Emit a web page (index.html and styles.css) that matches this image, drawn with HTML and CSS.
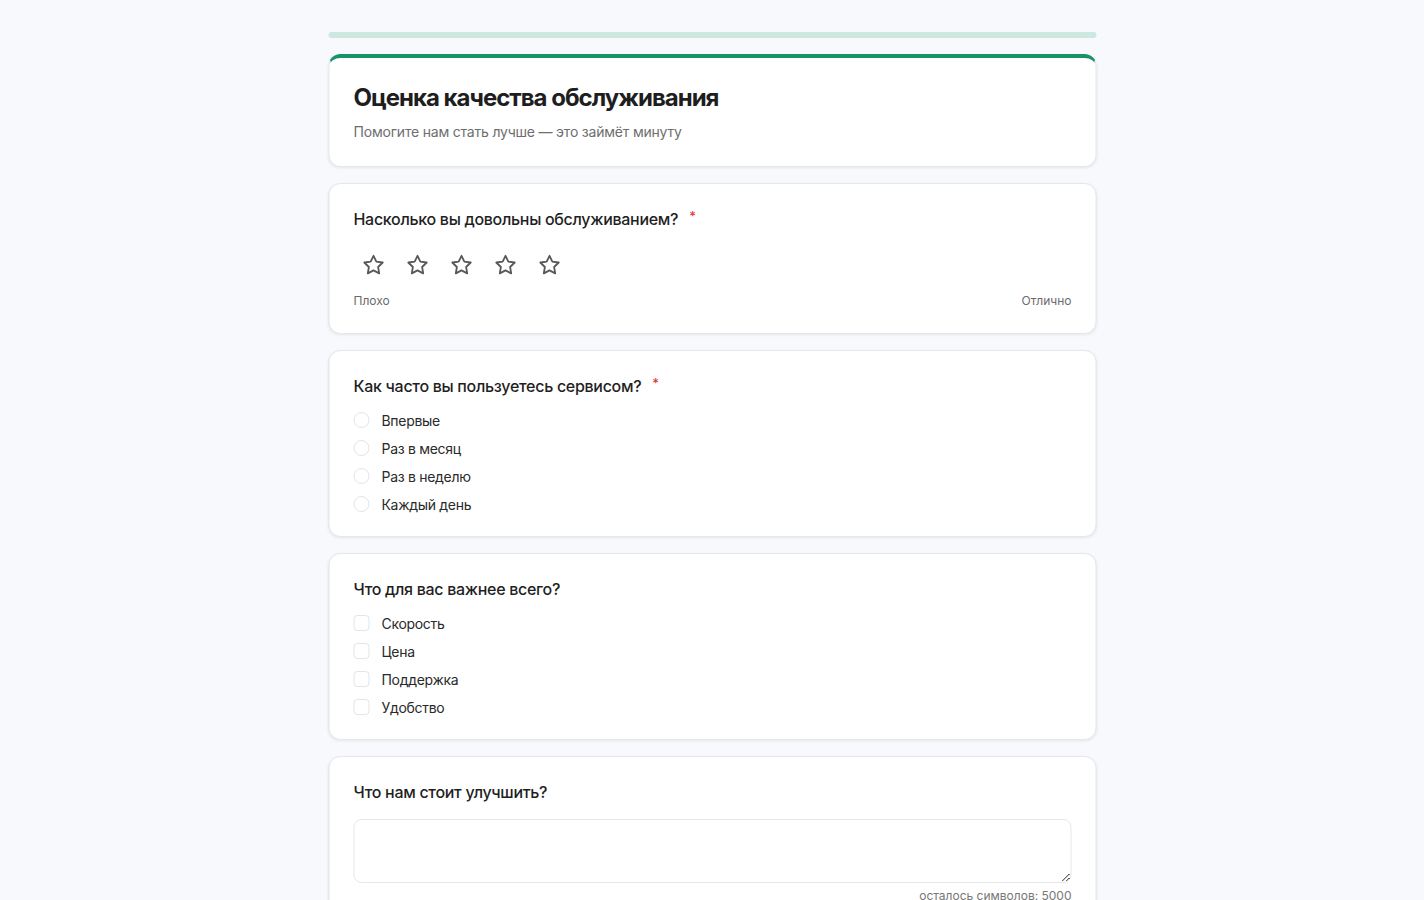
FILE: index.html
```html
<!DOCTYPE html>
<html lang="ru">
<head>
<meta charset="utf-8">
<title>Оценка качества обслуживания</title>
<link rel="stylesheet" href="styles.css">
</head>
<body>
<main class="form">
  <div class="progress"></div>

  <section class="card card-head">
    <h1 class="title">Оценка качества обслуживания</h1>
    <p class="subtitle">Помогите нам стать лучше — это займёт минуту</p>
  </section>

  <section class="card">
    <h2 class="question">Насколько вы довольны обслуживанием? <span class="req">*</span></h2>
    <div class="stars">
      <button class="star" type="button"><svg viewBox="0 0 24 24"><path d="M12 2.8l2.85 5.78 6.38.93-4.62 4.5 1.09 6.35L12 17.36l-5.7 3 1.09-6.35-4.62-4.5 6.38-.93z"/></svg></button>
      <button class="star" type="button"><svg viewBox="0 0 24 24"><path d="M12 2.8l2.85 5.78 6.38.93-4.62 4.5 1.09 6.35L12 17.36l-5.7 3 1.09-6.35-4.62-4.5 6.38-.93z"/></svg></button>
      <button class="star" type="button"><svg viewBox="0 0 24 24"><path d="M12 2.8l2.85 5.78 6.38.93-4.62 4.5 1.09 6.35L12 17.36l-5.7 3 1.09-6.35-4.62-4.5 6.38-.93z"/></svg></button>
      <button class="star" type="button"><svg viewBox="0 0 24 24"><path d="M12 2.8l2.85 5.78 6.38.93-4.62 4.5 1.09 6.35L12 17.36l-5.7 3 1.09-6.35-4.62-4.5 6.38-.93z"/></svg></button>
      <button class="star" type="button"><svg viewBox="0 0 24 24"><path d="M12 2.8l2.85 5.78 6.38.93-4.62 4.5 1.09 6.35L12 17.36l-5.7 3 1.09-6.35-4.62-4.5 6.38-.93z"/></svg></button>
    </div>
    <div class="scale"><span>Плохо</span><span>Отлично</span></div>
  </section>

  <section class="card">
    <h2 class="question">Как часто вы пользуетесь сервисом? <span class="req">*</span></h2>
    <ul class="options">
      <li class="option"><span class="radio"></span>Впервые</li>
      <li class="option"><span class="radio"></span>Раз в месяц</li>
      <li class="option"><span class="radio"></span>Раз в неделю</li>
      <li class="option"><span class="radio"></span>Каждый день</li>
    </ul>
  </section>

  <section class="card">
    <h2 class="question">Что для вас важнее всего?</h2>
    <ul class="options">
      <li class="option"><span class="check"></span>Скорость</li>
      <li class="option"><span class="check"></span>Цена</li>
      <li class="option"><span class="check"></span>Поддержка</li>
      <li class="option"><span class="check"></span>Удобство</li>
    </ul>
  </section>

  <section class="card">
    <h2 class="question">Что нам стоит улучшить?</h2>
    <textarea class="text"></textarea>
    <div class="counter">осталось символов: 5000</div>
  </section>
</main>
</body>
</html>
```

FILE: styles.css
```css
* { box-sizing: border-box; }
html, body { margin: 0; padding: 0; }
body {
  background: #f8f9fc;
  font-family: Inter, "Noto Sans", sans-serif;
  color: #1f1f1f;
}
.form {
  width: 768px;
  margin: 0 auto;
  padding-top: 32px;
  display: flex;
  flex-direction: column;
  gap: 16px;
  transform: translateX(0.5px);
}
.progress {
  height: 6px;
  border-radius: 3px;
  background: #cde9df;
}
.card {
  background: #fff;
  border: 1px solid #e6e7eb;
  border-radius: 12px;
  box-shadow: 0 1px 3px rgba(0,0,0,0.08);
  padding: 24px;
}
.card-head {
  border-top: 4px solid #169467;
}
.title {
  margin: 0;
  font-size: 24px;
  line-height: 32px;
  font-weight: 700;
  letter-spacing: -1px;
  color: #1e1e1e;
}
.subtitle {
  margin: 8px 0 0;
  font-size: 14px;
  line-height: 20px;
  letter-spacing: -0.2px;
  color: #6e6e6e;
}
.question {
  margin: 0;
  font-size: 16px;
  line-height: 22px;
  font-weight: 500;
  letter-spacing: -0.3px;
  color: #1f1f1f;
}
.req {
  color: #e0393e;
  font-size: 13px;
  margin-left: 7px;
  vertical-align: top;
  line-height: 16px;
}
.stars {
  display: flex;
  gap: 4px;
  margin-top: 15px;
}
.star {
  width: 40px;
  height: 40px;
  padding: 8px;
  border: 0;
  background: none;
  display: flex;
}
.star svg {
  width: 24px;
  height: 24px;
  fill: none;
  stroke: #585858;
  stroke-width: 1.8;
  stroke-linejoin: round;
}
.scale {
  display: flex;
  justify-content: space-between;
  margin-top: 8px;
  font-size: 12px;
  line-height: 16px;
  color: #6b6b6b;
}
.options {
  list-style: none;
  margin: 15px 0 0;
  padding: 0;
  display: flex;
  flex-direction: column;
  gap: 12px;
}
.option {
  display: flex;
  align-items: center;
  gap: 12px;
  height: 16px;
  font-size: 14px;
  letter-spacing: -0.3px;
  color: #2a2a2a;
}
.radio {
  width: 16px;
  height: 16px;
  border-radius: 50%;
  border: 1px solid #e3e4e8;
  background: #fff;
}
.check {
  width: 16px;
  height: 16px;
  border-radius: 4px;
  border: 1px solid #e3e4e8;
  background: #fff;
}
.text {
  display: block;
  width: 100%;
  height: 64px;
  margin-top: 16px;
  border: 1px solid #e6e7eb;
  border-radius: 8px;
  resize: vertical;
  font-family: inherit;
  font-size: 14px;
  padding: 10px 12px;
  background: #fff;
}
.counter {
  margin-top: 5px;
  text-align: right;
  font-size: 12px;
  line-height: 16px;
  color: #777;
}
```
